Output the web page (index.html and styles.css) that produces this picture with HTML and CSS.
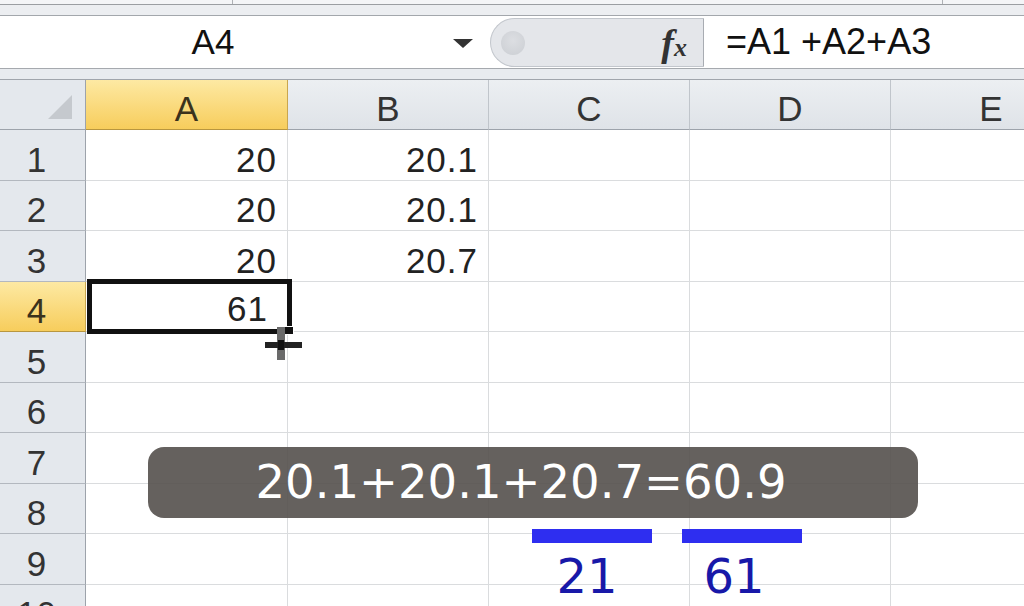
FILE: index.html
```html
<!DOCTYPE html>
<html lang="ja">
<head>
    <meta charset="UTF-8">
    <meta name="viewport" content="width=device-width, initial-scale=1.0">
    <title>Excel 表示形式</title>
    <link rel="stylesheet" href="styles.css">
</head>
<body>
    <div class="app">
        <div class="edge-top"><span class="w1"></span><span class="w2"></span></div>
        <div class="edge-band"></div>

        <!-- 数式バー -->
        <div class="formula-bar">
            <div class="name-box">
                <span class="name">A4</span>
                <span class="drop"></span>
            </div>
            <div class="fx-box">
                <span class="knob"></span>
                <span class="fx"><span class="f">f</span><span class="x">x</span></span>
            </div>
            <div class="formula">=A1 +A2+A3</div>
        </div>
        <div class="bar-gap"></div>

        <!-- シート -->
        <div class="sheet">
            <div class="corner"><span class="tri"></span></div>
            <div class="col-head on">A</div>
            <div class="col-head">B</div>
            <div class="col-head">C</div>
            <div class="col-head">D</div>
            <div class="col-head">E</div>

            <div class="row-head">1</div>
            <div class="cell">20</div>
            <div class="cell">20.1</div>
            <div class="cell"></div>
            <div class="cell"></div>
            <div class="cell"></div>

            <div class="row-head">2</div>
            <div class="cell">20</div>
            <div class="cell">20.1</div>
            <div class="cell"></div>
            <div class="cell"></div>
            <div class="cell"></div>

            <div class="row-head">3</div>
            <div class="cell">20</div>
            <div class="cell">20.7</div>
            <div class="cell"></div>
            <div class="cell"></div>
            <div class="cell"></div>

            <div class="row-head on">4</div>
            <div class="cell active">61<span class="sel-box"></span><span class="handle"></span></div>
            <div class="cell"></div>
            <div class="cell"></div>
            <div class="cell"></div>
            <div class="cell"></div>

            <div class="row-head">5</div>
            <div class="cell"></div>
            <div class="cell"></div>
            <div class="cell"></div>
            <div class="cell"></div>
            <div class="cell"></div>

            <div class="row-head">6</div>
            <div class="cell"></div>
            <div class="cell"></div>
            <div class="cell"></div>
            <div class="cell"></div>
            <div class="cell"></div>

            <div class="row-head">7</div>
            <div class="cell"></div>
            <div class="cell"></div>
            <div class="cell"></div>
            <div class="cell"></div>
            <div class="cell"></div>

            <div class="row-head">8</div>
            <div class="cell"></div>
            <div class="cell"></div>
            <div class="cell"></div>
            <div class="cell"></div>
            <div class="cell"></div>

            <div class="row-head">9</div>
            <div class="cell"></div>
            <div class="cell"></div>
            <div class="cell"></div>
            <div class="cell"></div>
            <div class="cell"></div>

            <div class="row-head">10</div>
            <div class="cell"></div>
            <div class="cell"></div>
            <div class="cell"></div>
            <div class="cell"></div>
            <div class="cell"></div>

            <!-- フィルハンドルのカーソル -->
            <svg class="cursor" width="40" height="40" viewBox="0 0 40 40">
                <rect x="14" y="5" width="8" height="33" fill="#6a6a6a"/>
                <rect x="2" y="20" width="37" height="6" fill="#222"/>
                <rect x="15" y="18" width="6" height="10" fill="#111"/>
            </svg>

            <!-- 解説 -->
            <div class="banner">20.1+20.1+20.7=60.9</div>
            <div class="note note-a"><span class="bar"></span><span class="val">21</span></div>
            <div class="note note-b"><span class="bar"></span><span class="val">61</span></div>
        </div>
    </div>
</body>
</html>
```

FILE: styles.css
```css
* {
    box-sizing: border-box;
}
body {
    margin: 0;
    background: #fff;
    font-family: "Liberation Sans", Arial, sans-serif;
}
.app {
    width: 1024px;
    height: 606px;
    overflow: hidden;
}

/* リボンの下端 */
.edge-top {
    height: 5px;
    display: flex;
    background: #f4f5f7;
    border-bottom: 1px solid #9b9ea2;
}
.edge-top span {
    border-right: 1px solid #aeb1b5;
}
.edge-top .w1 {
    width: 233px;
}
.edge-top .w2 {
    width: 710px;
}
.edge-band {
    height: 11px;
    background: #eceef1;
    border-bottom: 1px solid #a3a7ac;
}

/* 数式バー */
.formula-bar {
    display: flex;
    height: 53px;
    background: #fff;
    border-bottom: 1px solid #a5a9ae;
}
.name-box {
    width: 490px;
    display: flex;
    align-items: center;
}
.name {
    width: 426px;
    text-align: center;
    font-size: 35px;
    color: #111;
}
.drop {
    margin-left: 27px;
    margin-top: 2px;
    border-left: 10px solid transparent;
    border-right: 10px solid transparent;
    border-top: 9px solid #333;
}
.fx-box {
    width: 214px;
    margin: 2px 0 1px;
    display: flex;
    align-items: center;
    justify-content: space-between;
    padding: 0 16px 0 10px;
    background: #e4e6ea;
    border: 1px solid #c2c6cc;
    border-right-color: #a8acb2;
    border-radius: 26px 0 0 26px;
}
.knob {
    width: 24px;
    height: 24px;
    border-radius: 50%;
    background: radial-gradient(circle at 50% 40%, #dcdee2, #cbced3);
}
.fx {
    font-family: "Liberation Serif", serif;
    font-style: italic;
    font-weight: bold;
    color: #333;
    line-height: 1;
}
.fx .f {
    font-size: 38px;
}
.fx .x {
    font-size: 26px;
}
.formula {
    flex: 1;
    display: flex;
    align-items: center;
    padding-left: 22px;
    font-size: 36px;
    color: #111;
}
.bar-gap {
    height: 11px;
    background: #e8ebef;
    border-bottom: 1px solid #a0a5ac;
}

/* シート */
.sheet {
    position: relative;
    display: grid;
    grid-template-columns: 86px 202px repeat(4, 201px);
    grid-template-rows: 50px repeat(10, 50.5px);
    font-size: 35px;
    line-height: 1;
}
.corner {
    position: relative;
    background: #e4e8ed;
    border-right: 1px solid #9da3ab;
    border-bottom: 1px solid #9da3ab;
}
.corner .tri {
    position: absolute;
    right: 13px;
    bottom: 10px;
    width: 24px;
    height: 24px;
    background: #c5c9ce;
    clip-path: polygon(100% 0, 100% 100%, 0 100%);
}
.col-head {
    display: flex;
    align-items: flex-end;
    justify-content: center;
    padding-bottom: 3px;
    background: linear-gradient(#eceff2, #dfe3e8);
    border-right: 1px solid #c0c5cb;
    border-bottom: 1px solid #9da3ab;
    color: #333;
}
.col-head.on,
.row-head.on {
    background: linear-gradient(#fde9a3, #f7cd5c);
    border-bottom-color: #b8963f;
    border-right-color: #c9a64f;
    color: #3b321c;
}
.row-head {
    display: flex;
    align-items: flex-end;
    justify-content: center;
    padding: 0 12px 3px 0;
    background: #e4e8ed;
    border-right: 1px solid #9da3ab;
    border-bottom: 1px solid #b3b8bf;
    color: #333;
}
.cell {
    display: flex;
    align-items: flex-end;
    justify-content: flex-end;
    padding: 0 10px 3px 0;
    border-right: 1px solid #dadcde;
    border-bottom: 1px solid #dadcde;
    color: #222;
    letter-spacing: 1px;
}
.cell.active {
    position: relative;
    padding: 0 19px 5px 0;
}
.sel-box {
    position: absolute;
    top: -3px;
    left: 1px;
    right: -5px;
    bottom: -3px;
    border: 5px solid #111;
}
.handle {
    position: absolute;
    right: -7px;
    bottom: -4px;
    width: 11px;
    height: 9px;
    background: #111;
    border: 1px solid #fff;
}
.cursor {
    position: absolute;
    left: 263px;
    top: 242px;
}

/* 解説 */
.banner {
    position: absolute;
    left: 148px;
    top: 367px;
    width: 770px;
    height: 71px;
    display: flex;
    align-items: center;
    justify-content: center;
    padding-right: 24px;
    border-radius: 16px;
    background: rgba(84, 80, 76, 0.9);
    color: #fff;
    font-family: "DejaVu Sans", Verdana, sans-serif;
    font-size: 46.5px;
}
.note {
    position: absolute;
    top: 449px;
    width: 120px;
    display: flex;
    flex-direction: column;
    align-items: center;
}
.note-a {
    left: 532px;
    padding-right: 10px;
}
.note-b {
    left: 682px;
    padding-right: 16px;
}
.note .bar {
    width: 120px;
    height: 14px;
    background: #2e2ef0;
}
.note-a .bar {
    margin-right: -10px;
}
.note-b .bar {
    margin-right: -16px;
}
.note .val {
    margin-top: 9px;
    font-family: "DejaVu Sans", Verdana, sans-serif;
    font-size: 48px;
    line-height: 1;
    color: #1818a8;
}
```
